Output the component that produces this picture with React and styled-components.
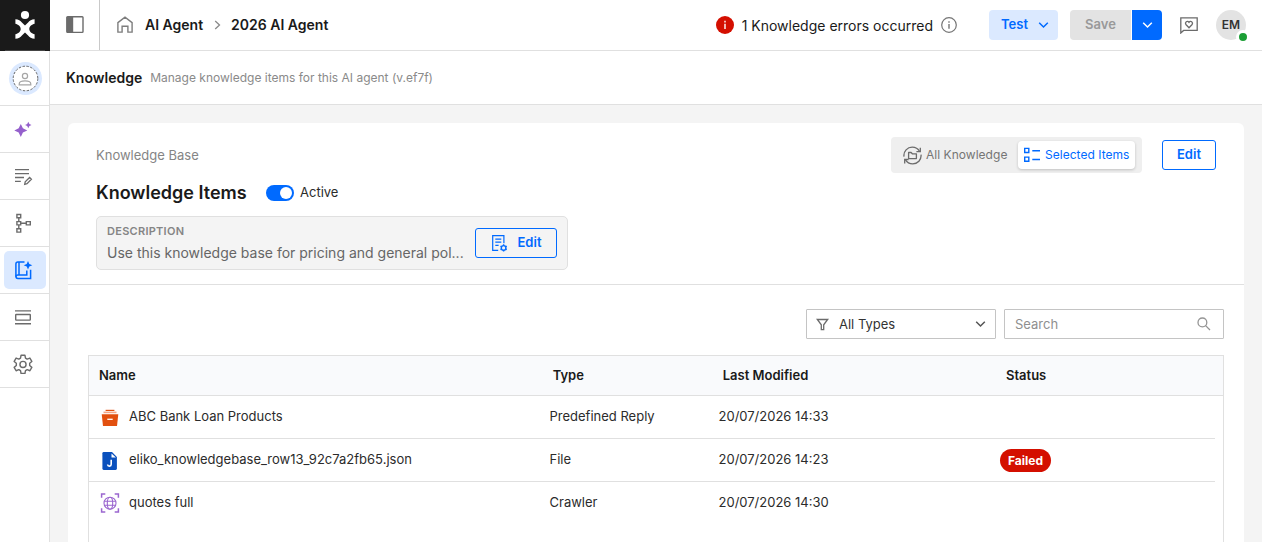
import React from "react";
import styled, { createGlobalStyle } from "styled-components";

const GlobalStyle = createGlobalStyle`
  * {
    box-sizing: border-box;
  }

  body {
    margin: 0;
    overflow: hidden;
    font-family: 'Inter', sans-serif;
    font-size: 13px;
    color: #1a1a1a;
    background-color: #f4f4f4;
  }

  button, input {
    font-family: inherit;
  }

  svg {
    display: block;
    flex: none;
  }
`;

const Page = styled.div`
  display: flex;
  height: 542px;
`;

const Sidebar = styled.nav`
  display: flex;
  flex-direction: column;
  flex: none;
  width: 50px;
  background-color: #fff;
`;

const Logo = styled.div`
  flex: none;
  width: 50px;
  height: 51px;
  background-color: #1a1a1a;
`;

const SideList = styled.div`
  flex: 1;
  border-right: 1px solid #e0e0e0;
`;

const SideItem = styled.div`
  display: flex;
  align-items: center;
  justify-content: center;
  height: ${(props) => props.$height || 47}px;
  padding: 0 3px 0 4px;
  border-bottom: 1px solid #e0e0e0;
`;

const SideButton = styled.div`
  display: flex;
  align-items: center;
  width: 42px;
  height: 38px;
  padding-left: 9px;
  border-radius: 5px;
  background-color: ${(props) => (props.$active ? "#dbe9ff" : "transparent")};
`;

const AgentAvatar = styled.div`
  width: 33px;
  height: 33px;
  margin: 1px 0 0 1px;
  border-radius: 50%;
  background-color: #dbe9ff;
`;

const Main = styled.div`
  display: flex;
  flex-direction: column;
  flex: 1;
  min-width: 0;
`;

const TopBar = styled.header`
  display: flex;
  align-items: center;
  flex: none;
  height: 51px;
  padding-right: 16px;
  border-bottom: 1px solid #e0e0e0;
  background-color: #fff;
`;

const PanelToggle = styled.div`
  width: 50px;
  height: 50px;
  padding: 16px 0 0 16px;
  border-right: 1px solid #c9c9c9;
`;

const Breadcrumb = styled.div`
  display: flex;
  align-items: center;
  flex: 1;
  padding-left: 17px;
`;

const Crumb = styled.span`
  font-size: 14px;
  font-weight: 600;
  line-height: 20px;
`;

const CrumbIcon = styled.span`
  margin: 0 ${(props) => props.$right}px 0 ${(props) => props.$left}px;
`;

const ErrorNote = styled.div`
  display: flex;
  align-items: center;
  gap: 8px;
  margin-right: 32px;
  font-size: 14px;
  line-height: 20px;

  span {
    padding-top: 2px;
  }
`;

const TestButton = styled.button`
  display: flex;
  align-items: center;
  justify-content: space-between;
  width: 69px;
  height: 30px;
  margin-right: 12px;
  padding: 0 9px 2px 12px;
  border: none;
  border-radius: 4px;
  font-size: 13px;
  font-weight: 600;
  line-height: 16px;
  background-color: #dbe9ff;
  color: #006aff;

  svg {
    margin-top: 2px;
  }
`;

const SaveGroup = styled.div`
  display: flex;
  gap: 1px;
  margin-right: 18px;
`;

const SaveButton = styled.button`
  width: 61px;
  height: 30px;
  padding: 0 0 2px;
  border: none;
  border-radius: 4px 0 0 4px;
  font-size: 13px;
  font-weight: 600;
  line-height: 16px;
  background-color: #e3e3e3;
  color: #999;
`;

const SaveMenuButton = styled.button`
  display: flex;
  align-items: center;
  justify-content: center;
  width: 30px;
  height: 30px;
  padding: 0;
  border: none;
  border-radius: 0 4px 4px 0;
  background-color: #006aff;
`;

const UserAvatar = styled.div`
  position: relative;
  width: 30px;
  height: 30px;
  margin-left: 18px;
  border-radius: 50%;
  font-size: 12px;
  font-weight: 600;
  line-height: 30px;
  text-align: center;
  background-color: #e3e3e3;
  color: #333;
`;

const OnlineDot = styled.span`
  position: absolute;
  right: -4px;
  bottom: -4px;
  width: 14px;
  height: 14px;
  border: 3px solid #fff;
  border-radius: 50%;
  background-color: #1b9e35;
`;

const SubBar = styled.div`
  display: flex;
  align-items: center;
  flex: none;
  gap: 8px;
  height: 54px;
  padding-left: 16px;
  border-bottom: 1px solid #e0e0e0;
  background-color: #fff;
`;

const PageTitle = styled.h1`
  margin: 0;
  font-size: 14px;
  font-weight: 600;
  line-height: 20px;
`;

const PageHint = styled.span`
  font-size: 12px;
  line-height: 20px;
  color: #8a8a8a;
`;

const Card = styled.section`
  flex: 1;
  margin: 18px 18px 0;
  border-radius: 6px 6px 0 0;
  background-color: #fff;
`;

const CardHead = styled.div`
  display: flex;
  justify-content: space-between;
  height: 162px;
  padding: 14px 28px 0;
  border-bottom: 1px solid #e0e0e0;
`;

const Overline = styled.div`
  padding: 8px 0 1px;
  font-size: 13px;
  line-height: 20px;
  color: #858585;
`;

const TitleRow = styled.div`
  display: flex;
  align-items: center;
  height: 24px;
  margin-top: 15px;
`;

const Title = styled.h2`
  width: 170px;
  margin: 0;
  font-size: 18px;
  font-weight: 600;
  line-height: 24px;
`;

const Switch = styled.span`
  display: flex;
  justify-content: flex-end;
  width: 28px;
  height: 16px;
  margin-right: 6px;
  padding: 2px;
  border-radius: 8px;
  background-color: #006aff;

  &::after {
    content: '';
    width: 12px;
    height: 12px;
    border-radius: 50%;
    background-color: #fff;
  }
`;

const SwitchLabel = styled.span`
  padding-bottom: 2px;
  color: #2b2b2b;
`;

const Description = styled.div`
  display: flex;
  align-items: center;
  justify-content: space-between;
  width: 472px;
  height: 54px;
  margin-top: 11px;
  padding: 0 10px;
  border: 1px solid #e0e0e0;
  border-radius: 5px;
  background-color: #f4f4f4;
`;

const DescriptionLabel = styled.div`
  font-size: 11px;
  font-weight: 600;
  line-height: 18px;
  letter-spacing: 0.27px;
  color: #858585;
`;

const DescriptionText = styled.div`
  font-size: 14px;
  line-height: 20px;
  padding: 3px 0 1px;
  white-space: nowrap;
  color: #666;
`;

const OutlineButton = styled.button`
  display: flex;
  align-items: center;
  justify-content: center;
  gap: 10px;
  width: ${(props) => props.$width}px;
  height: 30px;
  padding: 0 0 2px;
  border: 1px solid #006aff;
  border-radius: 3px;
  font-size: 13px;
  font-weight: 600;
  line-height: 16px;
  background-color: transparent;
  color: #006aff;

  svg {
    margin-top: 2px;
  }
`;

const CardActions = styled.div`
  display: flex;
  align-items: center;
  gap: 20px;
  height: 36px;
`;

const Segments = styled.div`
  display: flex;
  align-items: center;
  width: 251px;
  height: 36px;
  padding-left: 7px;
  border-radius: 4px;
  background-color: #efefef;
`;

const Segment = styled.div`
  display: flex;
  align-items: center;
  gap: 4px;
  width: ${(props) => (props.$active ? 117 : 120)}px;
  height: 28px;
  padding-left: 5px;
  border-radius: 4px;
  font-size: 12px;
  letter-spacing: 0.03px;
  white-space: nowrap;
  color: ${(props) => (props.$active ? "#006aff" : "#757575")};
  background-color: ${(props) => (props.$active ? "#fff" : "transparent")};
  box-shadow: ${(props) => (props.$active ? "0 1px 3px rgba(0, 0, 0, 0.2)" : "none")};

  span {
    padding-bottom: 1px;
  }
`;

const Filters = styled.div`
  display: flex;
  justify-content: flex-end;
  gap: 8px;
  padding: 24px 20px 16px;
`;

const TypeSelect = styled.div`
  display: flex;
  align-items: center;
  width: 190px;
  height: 30px;
  padding: 0 9px;
  border: 1px solid #c4c4c4;
  border-radius: 1px;
  color: #333;

  span {
    flex: 1;
    padding: 0 0 1px 10px;
  }
`;

const SearchBox = styled.div`
  display: flex;
  align-items: center;
  width: 220px;
  height: 30px;
  padding: 0 12px 0 10px;
  border: 1px solid #c4c4c4;
  border-radius: 1px;

  input {
    flex: 1;
    min-width: 0;
    padding: 0;
    border: none;
    outline: none;
    font-size: 13px;
    background: none;
  }

  input::placeholder {
    color: #8f8f8f;
  }
`;

const Table = styled.div`
  height: 190px;
  margin: 0 20px;
  border: 1px solid #e0e0e0;
  border-bottom: none;
`;

const HeadRow = styled.div`
  display: grid;
  grid-template-columns: 453.7px 170px 283.3px 1fr;
  align-items: center;
  height: 40px;
  padding: 0 0 1px 10px;
  border-bottom: 1px solid #e0e0e0;
  font-weight: 600;
  background-color: #f9fafc;
`;

const Row = styled.div`
  display: grid;
  grid-template-columns: 449.5px 169px 281.5px 1fr;
  align-items: center;
  height: 43px;
  margin-right: 8px;
  padding-left: 11px;
  border-bottom: 1px solid ${(props) => (props.$last ? "transparent" : "#e0e0e0")};
`;

const NameCell = styled.div`
  display: flex;
  align-items: center;
  gap: 9px;
`;

const CellText = styled.span`
  padding-bottom: 2px;
  line-height: 16px;
  color: #2b2b2b;
`;

const Cell = styled.div`
  display: flex;
`;

const Badge = styled.span`
  display: inline-flex;
  align-items: center;
  height: 23px;
  padding: 0 8px;
  border-radius: 12px;
  font-size: 12px;
  font-weight: 700;
  background-color: #d40f00;
  color: #fff;
`;

const Icon = ({ w = 20, h = 20, color = "#6b6b6b", sw = 1.3, children }) => (
    <svg width={w} height={h} viewBox={`0 0 ${w} ${h}`} fill="none" stroke={color} strokeWidth={sw}>
        {children}
    </svg>
);

const Chevron = ({ color }) => (
    <Icon w={11} h={8} color={color} sw={1.5}>
        <path d="M1.2 1.8L5.5 6L9.8 1.8" />
    </Icon>
);

const LogoMark = () => (
    <Icon w={50} h={51}>
        <circle cx="25" cy="15" r="4.1" fill="#fff" stroke="none" />
        <path
            d="M15.4 19.3C18.4 19.5 20.6 20.6 21.9 22.6L25 25.5L28.1 22.6C29.4 20.6 31.6 19.5 34.6 19.3V23.8C32 24.4 29.3 26.3 29.3 29C29.3 31.7 32 33.6 34.6 34.2V38.8C31.6 38.6 29.4 37.4 28.1 35.5L25 32.6L21.9 35.5C20.6 37.4 18.4 38.6 15.4 38.8V34.2C18 33.6 20.7 31.7 20.7 29C20.7 26.3 18 24.4 15.4 23.8Z"
            fill="#fff"
            stroke="none"
        />
        <path d="M5 50.5H45" stroke="#444" strokeWidth="1" />
    </Icon>
);

const AgentIcon = () => (
    <Icon w={33} h={33} color="#a6a6a6" sw={1.2}>
        <circle cx="16.5" cy="16.5" r="12.3" fill="#fff" stroke="#555" strokeWidth="0.9" strokeDasharray="2.4 1.5" />
        <circle cx="16" cy="14" r="2.6" />
        <path d="M10.2 22.8v-.9c0-2 2.5-3 5.8-3s5.8 1 5.8 3v.9z" />
    </Icon>
);

const SparkleIcon = () => (
    <Icon>
        <path d="M7.8 4.9L9.9 9.3L14.3 11.4L9.9 13.5L7.8 17.9L5.7 13.5L1.3 11.4L5.7 9.3Z" fill="#9560cc" stroke="none" />
        <path d="M15.3 2.8L16.4 4.9L18.5 6L16.4 7.1L15.3 9.2L14.2 7.1L12.1 6L14.2 4.9Z" fill="#9560cc" stroke="none" />
    </Icon>
);

const NoteIcon = () => (
    <Icon sw={1.4}>
        <path d="M2 3.6H16M2 7.6H16M2 11.5H11M2 15.4H7.8" />
        <path d="M11.7 18.3L12.2 15.9L16.6 11.5L18.4 13.3L14 17.7Z" strokeWidth="1.3" />
    </Icon>
);

const FlowIcon = () => (
    <Icon sw={1.4}>
        <path d="M3.9 1.5h3.8v3.3H3.9zM3.9 8.6h3.8v3.3H3.9zM3.9 15.8h3.8v3.3H3.9zM13.3 8.6h4v3.3h-4z" />
        <path d="M5.8 4.8V8.6M5.8 11.9V15.8M7.7 10.2H13.3" />
    </Icon>
);

const KnowledgeIcon = () => (
    <Icon color="#006aff" sw={1.5}>
        <path d="M11.5 1.9H4.9C3.5 1.9 2.9 2.7 2.9 3.9V16.3C2.9 17.8 3.7 18.4 4.9 18.4H17.6V9.8" />
        <path d="M6 1.9V15M3 16.7C3 15.6 3.7 15 4.8 15H13.8V10.4" />
        <path d="M15 1L16.3 4L19.3 5.3L16.3 6.6L15 9.6L13.7 6.6L10.7 5.3L13.7 4Z" fill="#006aff" stroke="none" />
    </Icon>
);

const LayersIcon = () => (
    <Icon sw={1.4}>
        <path d="M2 3.9H18M2 16.7H18" />
        <rect x="2.7" y="7.5" width="14.6" height="5.6" rx="0.5" />
    </Icon>
);

const GearIcon = () => (
    <Icon sw={1.25}>
        <g transform="translate(10 10.4) scale(1.13) translate(-10 -9.6)">
            <path d="M8.3 1.5h3.4l.5 2.5 1.5.9 2.4-.9 1.7 3-1.9 1.6v2l1.9 1.6-1.7 3-2.4-.9-1.5.9-.5 2.5H8.3l-.5-2.5-1.5-.9-2.4.9-1.7-3 1.9-1.6v-2L2.2 7l1.7-3 2.4.9 1.5-.9z" strokeLinejoin="round" />
            <circle cx="10" cy="9.6" r="2.7" />
        </g>
    </Icon>
);

const PanelIcon = () => (
    <Icon w={18} h={18} sw={1.4}>
        <rect x="0.8" y="0.8" width="16.2" height="15.6" rx="0.8" />
        <path d="M1 1h6.2v15.2H1z" fill="#6b6b6b" stroke="none" />
    </Icon>
);

const HomeIcon = () => (
    <Icon w={16} h={18} color="#7d7d7d" sw={1.4}>
        <path d="M0.9 6.6L8 1.1L15.1 6.6V16.1H10.9V10.2H5.1V16.1H0.9Z" />
    </Icon>
);

const ErrorIcon = () => (
    <Icon w={18} h={18} color="#fff" sw={1.4}>
        <circle cx="9" cy="9" r="9" fill="#d40f00" stroke="none" />
        <path d="M9 7.8V13M9 4.8V6.4" />
    </Icon>
);

const InfoIcon = () => (
    <Icon w={16} h={16} color="#757575" sw={1.2}>
        <circle cx="8" cy="8" r="7.3" />
        <path d="M8 7V11.7M8 4.2V5.8" strokeWidth="1.4" />
    </Icon>
);

const FeedbackIcon = () => (
    <Icon w={18} h={17}>
        <path d="M0.8 16V0.9H17.2V13.4H3.6Z" />
        <path d="M9 10.7L5.9 7.5C4.5 5.7 7.3 3 9 5.3C10.7 3 13.5 5.7 12.1 7.5Z" />
    </Icon>
);

const AllKnowledgeIcon = () => (
    <Icon w={19} h={19} sw={1.3}>
        <path d="M1 10.6C.3 5.2 4.5 1.2 9.2 1.2c3.2 0 5.9 1.6 7.4 4.3M18 8.6c.7 5.3-3.5 9.2-8.2 9.2-3.2 0-5.9-1.6-7.4-4.2" />
        <path d="M17.3 1.7V5.6H13.4M1.7 17.4V13.5H5.6" />
        <path d="M5.6 6.5h2.5l1.2 1.3h4.1v4.8H5.6z" strokeLinejoin="round" />
    </Icon>
);

const SelectedIcon = () => (
    <Icon w={18} h={16} color="#006aff" sw={1.4}>
        <path d="M1.7 1.4h4.1v4.1H1.7zM1.7 10.1h4.1v4.1H1.7zM9.3 3.8H17M9.3 12.5H17" />
    </Icon>
);

const DocGearIcon = () => (
    <Icon w={17} h={18} color="#006aff" sw={1.2}>
        <path d="M7.2 16.3H1.7V1.6H12.9V9.2M4.3 5.1H10.3M4.3 8.2H10.3M4.3 11.3H7.6" />
        <circle cx="12.6" cy="13.9" r="2.3" strokeWidth="1.4" />
        <path d="M12.6 10.3v1.2M12.6 16.3v1.2M9.5 12.1l1 .6M14.7 15.1l1 .6M9.5 15.7l1-.6M14.7 12.7l1-.6" strokeWidth="1.4" />
    </Icon>
);

const FilterIcon = () => (
    <Icon w={13} h={13}>
        <path d="M1.3 1.5H11.7L7.7 6.8V11.7H5.3V6.8Z" />
    </Icon>
);

const SearchIcon = () => (
    <Icon w={14} h={14} color="#949494">
        <circle cx="5.4" cy="5.4" r="4.4" />
        <path d="M8.6 8.6L13 13" />
    </Icon>
);

const ReplyIcon = () => (
    <Icon>
        <path d="M5.6 3.4H14.4" stroke="#e2500f" strokeWidth="1.2" />
        <path d="M3.5 5.4H16.5" stroke="#f3a585" strokeWidth="1.6" />
        <path d="M1.7 7.2H18.3L17 19H3Z" fill="#e2500f" stroke="none" />
        <path d="M7.3 12.3H12.7" stroke="#fff" strokeWidth="1.3" />
    </Icon>
);

const JsonIcon = () => (
    <Icon>
        <path d="M3.7 2H12L16.9 6.9V18.6Q16.9 19.9 15.6 19.9H3.7Q2.4 19.9 2.4 18.6V3.3Q2.4 2 3.7 2Z" fill="#0a50bd" stroke="none" />
        <path d="M11.5 3.4V7.6H15.9Z" fill="#fff" stroke="none" />
        <path d="M11.2 9.7V14.3C11.2 16.6 7.8 16.7 7.6 14.5" stroke="#fff" strokeWidth="1.6" />
    </Icon>
);

const CrawlerIcon = () => (
    <Icon color="#9a66cf" sw={1.1}>
        <path d="M1.6 4.7V1H5.3M14.7 1H18.4V4.7M1.6 15.3V19H5.3M14.7 19H18.4V15.3" strokeWidth="1.5" />
        <circle cx="10" cy="10.2" r="6" />
        <ellipse cx="10" cy="10.2" rx="2.7" ry="6" />
        <path d="M4.5 8.2H15.5M4.5 12.2H15.5" />
    </Icon>
);

const sideItems = [
    { icon: SparkleIcon },
    { icon: NoteIcon },
    { icon: FlowIcon },
    { icon: KnowledgeIcon, active: true },
    { icon: LayersIcon },
    { icon: GearIcon },
];

const rows = [
    { icon: ReplyIcon, name: "ABC Bank Loan Products", type: "Predefined Reply", modified: "20/07/2026 14:33" },
    { icon: JsonIcon, name: "eliko_knowledgebase_row13_92c7a2fb65.json", type: "File", modified: "20/07/2026 14:23", status: "Failed" },
    { icon: CrawlerIcon, name: "quotes full", type: "Crawler", modified: "20/07/2026 14:30" },
];

const App = () => {
    return(
        <Page>
            <GlobalStyle />
            <Sidebar>
                <Logo><LogoMark /></Logo>
                <SideList>
                    <SideItem $height={55}>
                        <AgentAvatar><AgentIcon /></AgentAvatar>
                    </SideItem>
                    {sideItems.map(({ icon: ItemIcon, active }, i) => (
                        <SideItem key={i}>
                            <SideButton $active={active}><ItemIcon /></SideButton>
                        </SideItem>
                    ))}
                </SideList>
            </Sidebar>
            <Main>
                <TopBar>
                    <PanelToggle><PanelIcon /></PanelToggle>
                    <Breadcrumb>
                        <CrumbIcon $left={0} $right={12}><HomeIcon /></CrumbIcon>
                        <Crumb>AI Agent</Crumb>
                        <CrumbIcon $left={11} $right={10}>
                            <Icon w={7} h={10} color="#8a8a8a">
                                <path d="M1.2 1L5.5 5L1.2 9" />
                            </Icon>
                        </CrumbIcon>
                        <Crumb>2026 AI Agent</Crumb>
                    </Breadcrumb>
                    <ErrorNote>
                        <ErrorIcon />
                        <span>1 Knowledge errors occurred</span>
                        <InfoIcon />
                    </ErrorNote>
                    <TestButton>Test <Chevron color="#006aff" /></TestButton>
                    <SaveGroup>
                        <SaveButton>Save</SaveButton>
                        <SaveMenuButton><Chevron color="#fff" /></SaveMenuButton>
                    </SaveGroup>
                    <FeedbackIcon />
                    <UserAvatar>EM<OnlineDot /></UserAvatar>
                </TopBar>
                <SubBar>
                    <PageTitle>Knowledge</PageTitle>
                    <PageHint>Manage knowledge items for this AI agent (v.ef7f)</PageHint>
                </SubBar>
                <Card>
                    <CardHead>
                        <div>
                            <Overline>Knowledge Base</Overline>
                            <TitleRow>
                                <Title>Knowledge Items</Title>
                                <Switch />
                                <SwitchLabel>Active</SwitchLabel>
                            </TitleRow>
                            <Description>
                                <div>
                                    <DescriptionLabel>DESCRIPTION</DescriptionLabel>
                                    <DescriptionText>Use this knowledge base for pricing and general pol...</DescriptionText>
                                </div>
                                <OutlineButton $width={82}><DocGearIcon />Edit</OutlineButton>
                            </Description>
                        </div>
                        <CardActions>
                            <Segments>
                                <Segment><AllKnowledgeIcon /><span>All Knowledge</span></Segment>
                                <Segment $active><SelectedIcon /><span>Selected Items</span></Segment>
                            </Segments>
                            <OutlineButton $width={54}>Edit</OutlineButton>
                        </CardActions>
                    </CardHead>
                    <Filters>
                        <TypeSelect>
                            <FilterIcon />
                            <span>All Types</span>
                            <Chevron color="#555" />
                        </TypeSelect>
                        <SearchBox>
                            <input placeholder="Search" />
                            <SearchIcon />
                        </SearchBox>
                    </Filters>
                    <Table>
                        <HeadRow>
                            <span>Name</span>
                            <span>Type</span>
                            <span>Last Modified</span>
                            <span>Status</span>
                        </HeadRow>
                        {rows.map(({ icon: RowIcon, name, type, modified, status }, i) => (
                            <Row key={name} $last={i === rows.length - 1}>
                                <NameCell><RowIcon /><CellText>{name}</CellText></NameCell>
                                <CellText>{type}</CellText>
                                <CellText>{modified}</CellText>
                                <Cell>{status && <Badge>{status}</Badge>}</Cell>
                            </Row>
                        ))}
                    </Table>
                </Card>
            </Main>
        </Page>
    )
}

export default App;
